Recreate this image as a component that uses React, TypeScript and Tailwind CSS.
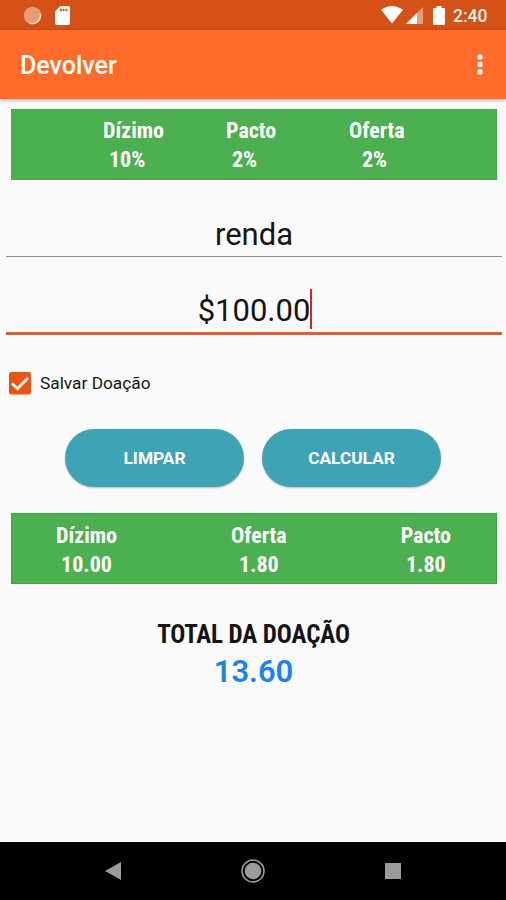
import React from "react";

const condensed = "font-['Roboto_Condensed',Roboto,sans-serif] font-stretch-condensed font-bold";

const rates = [
  { label: "Dízimo", value: "10%", indent: "pl-[6px]" },
  { label: "Pacto", value: "2%", indent: "pl-[6px]" },
  { label: "Oferta", value: "2%", indent: "pl-[13px]" },
];

const results = [
  { label: "Dízimo", value: "10.00" },
  { label: "Oferta", value: "1.80" },
  { label: "Pacto", value: "1.80" },
];

function StatusBar() {
  return (
    <div className="flex h-[30px] shrink-0 items-center bg-[#d45217] pr-[18px] pl-[23px]">
      <svg width="19" height="19" viewBox="0 0 19 19">
        <circle cx="9.5" cy="9.5" r="8.8" fill="#e99b76" />
        <path d="M17.3 7.5A8.2 8.2 0 0 1 6.5 17" fill="none" stroke="#fbe3d8" strokeWidth="1.5" />
      </svg>
      <svg className="ml-[13px]" width="15" height="19" viewBox="0 0 15 19">
        <path d="M5.5 0H13Q15 0 15 2V17Q15 19 13 19H2Q0 19 0 17V5.5Z" fill="#fff" />
        <path d="M5 2.7h2v2.6H5zM7.8 2.7h1.7v2.6H7.8zM10.4 2.7h2v2.6h-2z" fill="#d45217" />
      </svg>
      <svg className="ml-auto" width="22" height="18" viewBox="0 0 22 18">
        <path d="M0 3.8Q11-3.8 22 3.8L11 17.5Z" fill="#fff" />
      </svg>
      <svg className="ml-[3px]" width="17" height="17" viewBox="0 0 17 17">
        <path d="M17 0V17H0Z" fill="#e99b76" />
        <path d="M11 6V17H0Z" fill="#fff" />
      </svg>
      <svg className="ml-[10px]" width="12" height="19" viewBox="0 0 12 19">
        <path d="M3.5 0h5v2H11q1 0 1 1V18q0 1-1 1H1q-1 0-1-1V3q0-1 1-1h2.5Z" fill="#fff" />
      </svg>
      <span className="ml-[8px] w-[35px] pt-[2px] text-[17.5px] leading-5 font-medium whitespace-nowrap text-[#fff0e8]">2:40</span>
    </div>
  );
}

function PillButton({ children }: { children: string }) {
  return (
    <button className="h-[58px] w-[179px] rounded-full bg-[#3fa3b6] pt-[2px] text-[17.3px] font-bold text-white shadow-[0_1px_2px_rgba(0,0,0,0.25)]">
      {children}
    </button>
  );
}

export default function App() {
  return (
    <div className="flex h-[900px] w-[506px] flex-col overflow-hidden bg-[#fafafa] font-[Roboto,sans-serif] text-[#151515]">
      <StatusBar />
      <header className="flex h-[69px] shrink-0 items-center justify-between bg-[#ff6b2b] pr-[23px] pl-5 text-white shadow-[0_1px_4px_rgba(0,0,0,0.35)]">
        <h1 className="pt-[3px] text-[25px] font-medium">Devolver</h1>
        <svg width="6" height="21" viewBox="0 0 6 21" fill="#fff">
          <circle cx="3" cy="3" r="2.7" />
          <circle cx="3" cy="10.5" r="2.7" />
          <circle cx="3" cy="18" r="2.7" />
        </svg>
      </header>

      <main className="flex flex-1 flex-col">
        <section className={`mr-[9px] ml-[11px] mt-[10px] grid h-[71px] grid-cols-[123px_123px_123px] border border-[#3fac45] bg-[#4caf50] pt-[6px] pl-[91px] text-[22px] leading-[29px] text-white ${condensed}`}>
          {rates.map((r) => (
            <div key={r.label}>
              <div>{r.label}</div>
              <div className={r.indent}>{r.value}</div>
            </div>
          ))}
        </section>

        <div className="mr-[4px] ml-[6px] mt-[32px] flex h-[45px] justify-center border-b border-[#929292] text-[31px] leading-[46px]">renda</div>
        <div className="mr-[4px] ml-[6px] mt-[32px] flex h-[46px] justify-center border-b-[3px] border-[#e0602b] pl-[2px] text-[31px] leading-[43px]">
          <span>$100.00</span>
          <span className="h-[40px] w-[2px] bg-[#e02020]" />
        </div>

        <label className="mt-[37px] ml-[9px] flex h-[23px] items-center text-[17px]">
          <svg width="22" height="23" viewBox="0 0 22 23">
            <rect width="22" height="22.5" rx="2.5" fill="#ed5314" />
            <path d="M3 11.5L8.5 16.7L19 6" fill="none" stroke="#fff" strokeWidth="2.7" />
          </svg>
          <span className="ml-[9px] text-[17.3px]">Salvar Doação</span>
        </label>

        <div className="mt-[34px] flex justify-center gap-[18px]">
          <PillButton>LIMPAR</PillButton>
          <PillButton>CALCULAR</PillButton>
        </div>

        <section className={`mr-[9px] ml-[11px] mt-[26px] flex h-[71px] justify-between border border-[#37aa3e] bg-[#4caf50] pt-[7px] pr-[45px] pl-[44px] text-center text-[22px] leading-[29px] text-white ${condensed}`}>
          {results.map((r) => (
            <div key={r.label}>
              <div>{r.label}</div>
              <div>{r.value}</div>
            </div>
          ))}
        </section>

        <div className={`mt-[33px] pl-px text-center text-[25px] leading-[36px] tracking-[-0.1px] ${condensed}`}>TOTAL DA DOAÇÃO</div>
        <div className="pl-px text-center text-[31px] leading-[38px] font-semibold text-[#1e82e6]">13.60</div>
      </main>

      <nav className="flex h-[58px] shrink-0 items-center bg-black pl-[105px]">
        <svg width="16" height="18" viewBox="0 0 16 18"><path d="M0 9L16 0V18Z" fill="#9b9b9b" /></svg>
        <svg className="ml-[120px]" width="24" height="24" viewBox="0 0 24 24">
          <circle cx="12" cy="12" r="11" fill="none" stroke="#9b9b9b" strokeWidth="1.5" />
          <circle cx="12" cy="12" r="8.3" fill="#9b9b9b" />
        </svg>
        <span className="ml-[120px] h-4 w-4 bg-[#9b9b9b]" />
      </nav>
    </div>
  );
}
